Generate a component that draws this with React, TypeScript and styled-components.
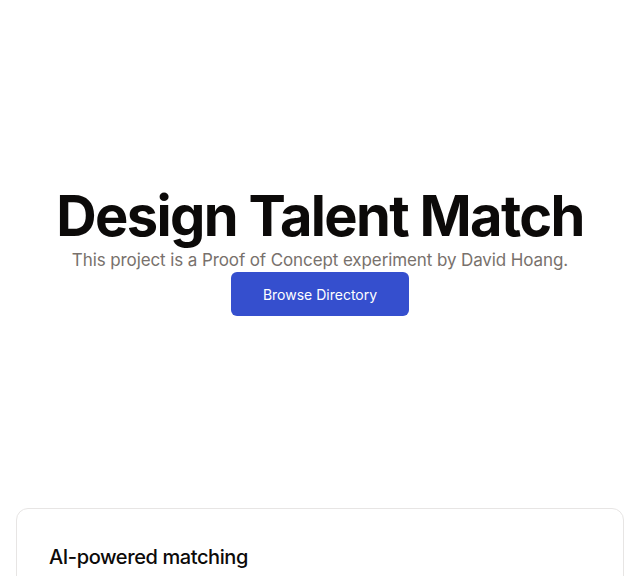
import React from "react";
import styled, { createGlobalStyle } from "styled-components";

const GlobalStyle = createGlobalStyle`
  html, body {
    margin: 0;
    padding: 0;
    background: #ffffff;
    font-family: Inter, "Noto Sans", sans-serif;
    color: #0c0a09;
  }
  * {
    box-sizing: border-box;
  }
`;

const Hero = styled.section`
  display: flex;
  flex-direction: column;
  align-items: center;
  justify-content: center;
  height: 500px;
  padding-top: 4px;
  text-align: center;
`;

const Title = styled.h1`
  margin: 0;
  font-size: 56px;
  font-weight: 700;
  line-height: 1;
  letter-spacing: -0.03em;
  color: #0c0a09;
`;

const Subtitle = styled.p`
  margin: 4px 0 0;
  font-size: 17px;
  line-height: 24px;
  letter-spacing: -0.006em;
  color: #78716c;
`;

const Button = styled.a`
  display: inline-flex;
  align-items: center;
  justify-content: center;
  width: 178px;
  height: 44px;
  border-radius: 6px;
  background: #354fce;
  color: #ffffff;
  font-size: 14px;
  font-weight: 400;
  text-decoration: none;
  cursor: pointer;
`;

const Features = styled.section`
  display: flex;
  flex-direction: column;
  gap: 16px;
  padding: 8px 16px 32px;
`;

const Card = styled.div`
  border: 1px solid #e7e5e4;
  border-radius: 12px;
  padding: 32px;
  background: #ffffff;
`;

const CardTitle = styled.h3`
  margin: 0;
  font-size: 20px;
  font-weight: 500;
  line-height: 32px;
  letter-spacing: -0.02em;
`;

const CardText = styled.p`
  margin: 8px 0 0;
  font-size: 15px;
  line-height: 22px;
  color: #78716c;
`;

const features = [
  {
    title: "AI-powered matching",
    text: "Describe the role you are hiring for and get a shortlist of designers whose work and experience fit it best.",
  },
  {
    title: "Curated directory",
    text: "Browse a hand-picked collection of product, brand and interaction designers, filterable by skill and location.",
  },
  {
    title: "Portfolio insights",
    text: "See highlights from each designer's portfolio at a glance, so you can decide faster who to reach out to.",
  },
];

export default function App() {
  return (
    <>
      <GlobalStyle />
      <Hero>
        <Title>Design Talent Match</Title>
        <Subtitle>This project is a Proof of Concept experiment by David Hoang.</Subtitle>
        <Button>Browse Directory</Button>
      </Hero>
      <Features>
        {features.map((f) => (
          <Card key={f.title}>
            <CardTitle>{f.title}</CardTitle>
            <CardText>{f.text}</CardText>
          </Card>
        ))}
      </Features>
    </>
  );
}
